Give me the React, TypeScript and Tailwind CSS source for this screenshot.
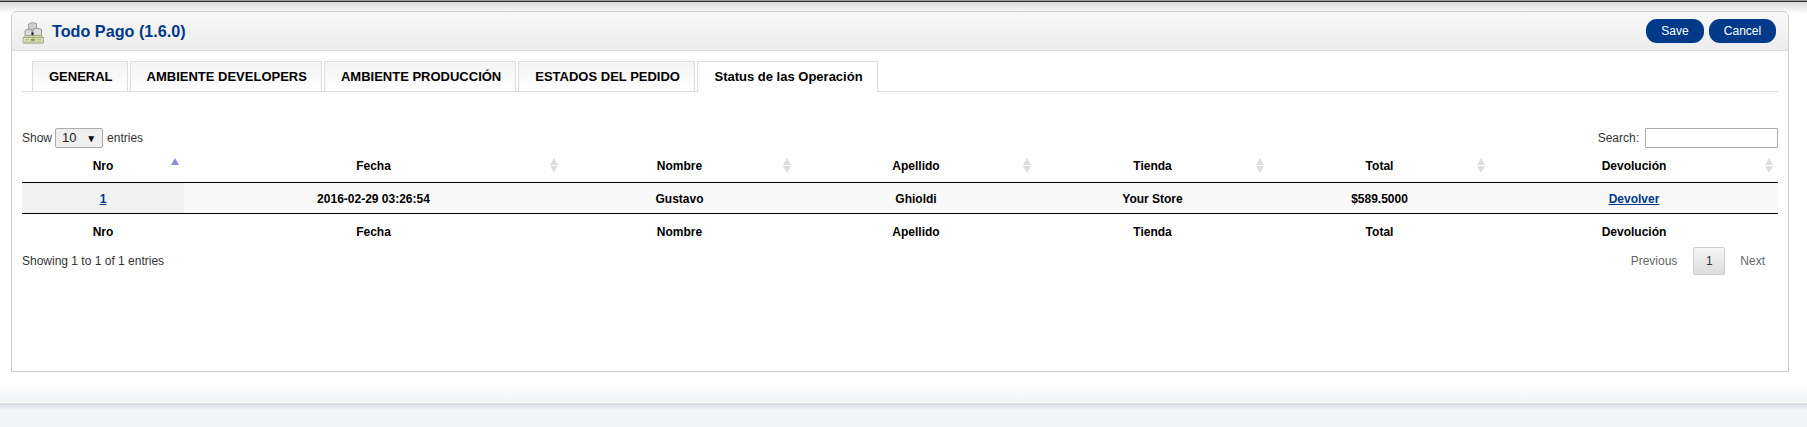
const columns = [
  { name: "Nro", width: "w-[162px]" },
  { name: "Fecha", width: "w-[379px]" },
  { name: "Nombre", width: "w-[233px]" },
  { name: "Apellido", width: "w-[240px]" },
  { name: "Tienda", width: "w-[233px]" },
  { name: "Total", width: "w-[221px]" },
  { name: "Devolución", width: "w-[288px]" },
];

const tabs = ["GENERAL", "AMBIENTE DEVELOPERS", "AMBIENTE PRODUCCIÓN", "ESTADOS DEL PEDIDO"];

function ModuleIcon() {
  return (
    <svg width="22" height="22" viewBox="0 0 22 22" className="mt-[4px] shrink-0">
      <path d="M6.5 2 L10 0.5 L14.5 1.5 V10 H6.5 Z" fill="#cfcfcf" stroke="#8f8f8f" strokeWidth="0.8" />
      <path d="M3 8.5 L6 7 L10 8 V13.5 H3 Z" fill="#dadada" stroke="#858585" strokeWidth="0.8" />
      <path d="M11 7.5 L15 6 L19.5 7.5 V13.5 H11 Z" fill="#dedede" stroke="#858585" strokeWidth="0.8" />
      <path d="M9.5 10.5 H11.5 V13.5 H9.5 Z" fill="#222" />
      <path d="M3 13.5 H19.5 L21.5 16 H1 Z" fill="#d3dbac" stroke="#8f9a68" strokeWidth="0.6" />
      <rect x="1" y="15.5" width="20.5" height="5.7" rx="0.8" fill="#dbe2ba" stroke="#8f9a68" strokeWidth="0.7" />
      <ellipse cx="11" cy="17.8" rx="2.4" ry="1.3" fill="#8ea04f" />
      <path d="M3.2 17.8 H7 M15 17.8 H19.2" stroke="#a3ae76" strokeWidth="0.9" />
      <path d="M2 20 H20.5" stroke="#a9b483" strokeWidth="0.8" />
    </svg>
  );
}

function SortIcon({ active }: { active?: boolean }) {
  if (active) {
    return (
      <svg width="8" height="7" viewBox="0 0 8 7" className="absolute right-[5px] top-[8px]">
        <path d="M4 0 L8 7 H0 Z" fill="#8a8ae0" />
      </svg>
    );
  }
  return (
    <svg width="8" height="15" viewBox="0 0 8 15" className="absolute right-[5px] top-[8px]">
      <path d="M4 0 L8 7 H0 Z" fill="#dedede" />
      <path d="M0 8 H8 L4 15 Z" fill="#dedede" />
    </svg>
  );
}

export default function App() {
  return (
    <div className="h-[427px] overflow-hidden border-t border-[#999] bg-[#f3f4f6] font-['Liberation_Sans',Arial,sans-serif] text-[12px] text-[#333]">
      <div className="h-[401px] border-t border-[#333] bg-gradient-to-b from-[#dcdcdc] via-white via-[3%] to-white">
        <div className="flex h-full flex-col bg-gradient-to-b from-transparent from-[95%] to-[#f3f4f6] px-[11px] pt-[9px]">
          <div className="flex h-[361px] w-[1778px] flex-col rounded-t-[6px] border border-[#ccc] bg-white">
            {/* Cabecera */}
            <div className="flex h-[39px] shrink-0 items-center justify-between rounded-t-[6px] border-b border-[#ddd] bg-gradient-to-b from-[#f9f9f9] to-[#ececec] pl-[10px] pr-[12px]">
              <div className="flex items-center gap-[8px]">
                <ModuleIcon />
                <h1 className="text-[16.2px] font-bold text-[#003a88]">Todo Pago (1.6.0)</h1>
              </div>
              <div className="flex gap-[5px]">
                <button className="h-[24px] w-[58px] rounded-[11px] bg-[#003a88] text-[12px] text-white">Save</button>
                <button className="h-[24px] w-[67px] rounded-[11px] bg-[#003a88] text-[12px] text-white">Cancel</button>
              </div>
            </div>

            <div className="px-[10px] pt-[10px]">
              {/* Pestañas */}
              <div className="flex h-[31px] gap-[2px] border-b border-[#ddd] pl-[10px]">
                {tabs.map((tab) => (
                  <div
                    key={tab}
                    className="flex h-[30px] items-center border-x border-t border-[#ddd] bg-gradient-to-b from-[#f3f3f3] to-white pl-[16px] pr-[14px] text-[13px] font-bold text-black"
                  >
                    {tab}
                  </div>
                ))}
                <div className="flex h-[31px] items-center border-x border-t border-[#ddd] bg-white pl-[16.5px] pr-[14.5px] text-[13px] font-bold text-black">
                  Status de las Operación
                </div>
              </div>

              {/* Controles de la tabla */}
              <div className="mt-[36px] flex h-[20px] items-center justify-between">
                <div className="flex items-center">
                  <span>Show</span>
                  <div className="ml-[3px] mr-[4px] flex h-[20px] w-[48px] items-center justify-between rounded-[2px] border border-[#aaa] bg-[#efefef] pl-[6px] pr-[6px] text-[13px] text-[#222]">
                    <span>10</span>
                    <span className="text-[10px] text-black">▼</span>
                  </div>
                  <span>entries</span>
                </div>
                <div className="flex items-center gap-[6px]">
                  <span>Search:</span>
                  <input className="h-[20px] w-[133px] rounded-[1px] border border-[#aaa] bg-white" />
                </div>
              </div>

              {/* Tabla */}
              <table className="mt-[2px] w-[1756px] table-fixed border-collapse text-[12px] font-bold text-black">
                <colgroup>
                  {columns.map((col) => (
                    <col key={col.name} className={col.width} />
                  ))}
                </colgroup>
                <thead>
                  <tr className="h-[32px] border-b border-black">
                    {columns.map((col, i) => (
                      <th key={col.name} className="relative text-center font-bold">
                        {col.name}
                        <SortIcon active={i === 0} />
                      </th>
                    ))}
                  </tr>
                </thead>
                <tbody>
                  <tr className="h-[31px] border-b border-black bg-[#f9f9f9] text-center">
                    <td className="bg-[#f1f1f1] pt-[2px]">
                      <a className="text-[#003a88] underline">1</a>
                    </td>
                    <td className="pt-[2px]">2016-02-29 03:26:54</td>
                    <td className="pt-[2px]">Gustavo</td>
                    <td className="pt-[2px]">Ghioldi</td>
                    <td className="pt-[2px]">Your Store</td>
                    <td className="pt-[2px]">$589.5000</td>
                    <td className="pt-[2px]">
                      <a className="text-[#003a88] underline">Devolver</a>
                    </td>
                  </tr>
                </tbody>
                <tfoot>
                  <tr className="h-[34px]">
                    {columns.map((col) => (
                      <th key={col.name} className="pt-[3px] text-center font-bold">
                        {col.name}
                      </th>
                    ))}
                  </tr>
                </tfoot>
              </table>

              {/* Pie */}
              <div className="flex items-start justify-between">
                <div className="pt-[5px]">Showing 1 to 1 of 1 entries</div>
                <div className="flex items-center pr-[13px] text-[#666]">
                  <span className="mr-[16px]">Previous</span>
                  <span className="flex h-[28px] w-[32px] items-center justify-center rounded-[2px] border border-[#ccc] bg-gradient-to-b from-[#f6f6f6] to-[#dcdcdc] text-[#333]">
                    1
                  </span>
                  <span className="ml-[15px]">Next</span>
                </div>
              </div>
            </div>
          </div>
        </div>
      </div>
      <div className="h-[8px] border-t border-white bg-gradient-to-b from-[#d3dae1] to-[#f3f4f6]" />
    </div>
  );
}
